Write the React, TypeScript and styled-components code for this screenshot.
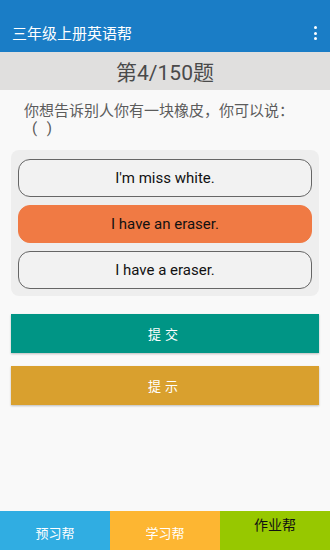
import styled, { createGlobalStyle } from "styled-components";

const Global = createGlobalStyle`
    html, body {
        margin: 0;
        padding: 0;
        background: #f9f9f9;
    }
    * {
        box-sizing: border-box;
    }
`;

const Screen = styled.div`
    width: 330px;
    height: 550px;
    display: flex;
    flex-direction: column;
    font-family: Roboto, "Noto Sans CJK SC", sans-serif;
    background: #f9f9f9;
    overflow: hidden;
`;

const Toolbar = styled.div`
    height: 52px;
    background: #1a7dc6;
    display: flex;
    align-items: flex-end;
    justify-content: space-between;
    padding: 0 10px 9px 12px;
    color: #fff;
`;

const AppTitle = styled.div`
    font-size: 15px;
    line-height: 18px;
`;

const Dots = styled.div`
    display: flex;
    flex-direction: column;
    gap: 2.5px;
    padding: 2px 3px 3px;
    span {
        width: 3px;
        height: 3px;
        border-radius: 50%;
        background: #fff;
    }
`;

const Counter = styled.div`
    height: 38px;
    background: #e0dfde;
    display: flex;
    align-items: center;
    justify-content: center;
    font-size: 21px;
    color: #4a4a4a;
`;

const Question = styled.div`
    padding: 13px 24px 0 24px;
    font-size: 15px;
    line-height: 17px;
    color: #5c5c5c;
    height: 60px;
`;

const Blank = styled.span`
    padding-left: 8px;
    letter-spacing: 3px;
`;

const Options = styled.div`
    margin: 0 11px;
    background: #eeeeee;
    border-radius: 8px;
    padding: 9px 7px 7px;
    display: flex;
    flex-direction: column;
    gap: 8px;
`;

const Option = styled.div<{ $active?: boolean }>`
    height: 38px;
    border-radius: 12px;
    border: 1px solid ${(p) => (p.$active ? "#f07a44" : "#666")};
    background: ${(p) => (p.$active ? "#f07a44" : "#f2f2f2")};
    display: flex;
    align-items: center;
    justify-content: center;
    font-size: 15px;
    color: #111;
`;

const Actions = styled.div`
    margin-top: 18px;
    padding: 0 11px;
    display: flex;
    flex-direction: column;
    gap: 13px;
`;

const ActionButton = styled.div<{ $color: string }>`
    height: 39px;
    background: ${(p) => p.$color};
    color: #fff;
    font-size: 13px;
    letter-spacing: 4px;
    display: flex;
    align-items: center;
    justify-content: center;
    box-shadow: 0 1px 2px rgba(0, 0, 0, 0.25);
`;

const Spacer = styled.div`
    flex: 1;
`;

const Nav = styled.div`
    height: 39px;
    display: grid;
    grid-template-columns: 1fr 1fr 1fr;
`;

const NavItem = styled.div<{ $bg: string; $dark?: boolean }>`
    background: ${(p) => p.$bg};
    color: ${(p) => (p.$dark ? "#111" : "#fff")};
    font-size: ${(p) => (p.$dark ? "14px" : "13px")};
    display: flex;
    justify-content: center;
    align-items: ${(p) => (p.$dark ? "flex-start" : "center")};
    padding-top: 3px;
`;

export default function App() {
    return (
        <Screen>
            <Global />
            <Toolbar>
                <AppTitle>三年级上册英语帮</AppTitle>
                <Dots>
                    <span />
                    <span />
                    <span />
                </Dots>
            </Toolbar>
            <Counter>第4/150题</Counter>
            <Question>
                你想告诉别人你有一块橡皮，你可以说：
                <br />
                <Blank>( )</Blank>
            </Question>
            <Options>
                <Option>I'm miss white.</Option>
                <Option $active>I have an eraser.</Option>
                <Option>I have a eraser.</Option>
            </Options>
            <Actions>
                <ActionButton $color="#009585">提交</ActionButton>
                <ActionButton $color="#d9a02e">提示</ActionButton>
            </Actions>
            <Spacer />
            <Nav>
                <NavItem $bg="#30ade2">预习帮</NavItem>
                <NavItem $bg="#fdb632">学习帮</NavItem>
                <NavItem $bg="#97c800" $dark>作业帮</NavItem>
            </Nav>
        </Screen>
    );
}
